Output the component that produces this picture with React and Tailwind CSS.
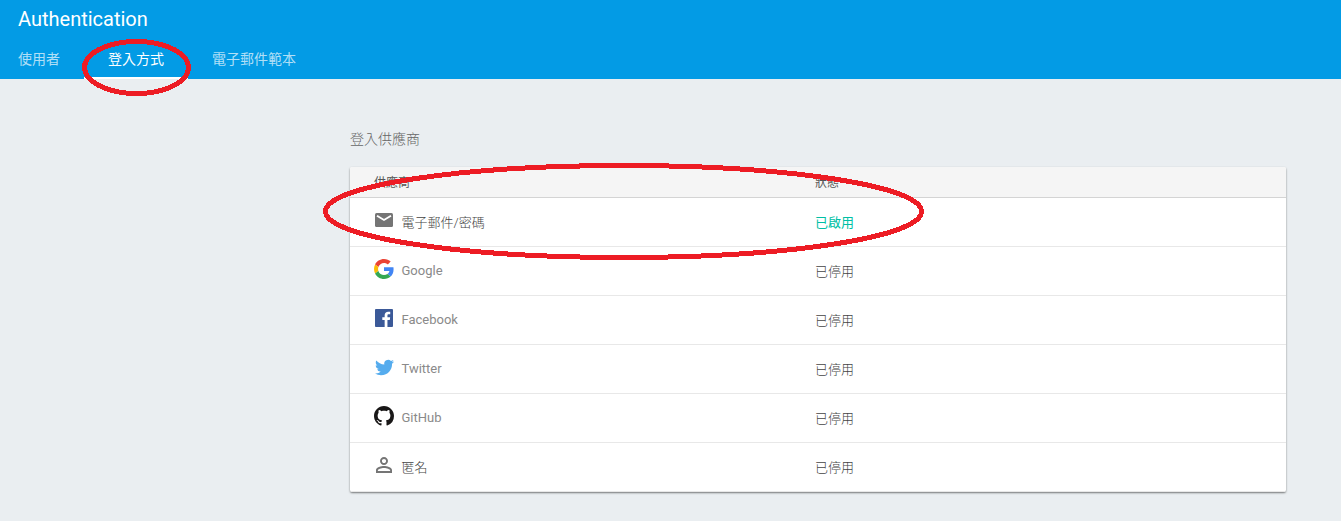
import React from "react";

const MailIcon = () => (
  <svg viewBox="0 0 18 14" className="h-[14px] w-[18px]">
    <rect width="18" height="14" rx="1.5" fill="#757575" />
    <path d="M2 2.8L9 7l7-4.2" fill="none" stroke="#fff" strokeWidth="1.9" />
  </svg>
);

const GoogleIcon = () => (
  <svg viewBox="0 0 48 48" className="size-5">
    <path fill="#EA4335" d="M24 9.5c3.54 0 6.71 1.22 9.21 3.6l6.85-6.85C35.9 2.38 30.47 0 24 0 14.62 0 6.51 5.38 2.56 13.22l7.98 6.19C12.43 13.72 17.74 9.5 24 9.5z" />
    <path fill="#4285F4" d="M46.98 24.55c0-1.57-.15-3.09-.38-4.55H24v9.02h12.94c-.58 2.96-2.26 5.48-4.78 7.18l7.73 6c4.51-4.18 7.09-10.36 7.09-17.65z" />
    <path fill="#FBBC05" d="M10.53 28.59c-.48-1.45-.76-2.99-.76-4.59s.27-3.14.76-4.59l-7.98-6.19C.92 16.46 0 20.12 0 24c0 3.88.92 7.54 2.56 10.78l7.97-6.19z" />
    <path fill="#34A853" d="M24 48c6.48 0 11.93-2.13 15.89-5.81l-7.73-6c-2.15 1.45-4.92 2.3-8.16 2.3-6.26 0-11.57-4.22-13.47-9.91l-7.98 6.19C6.51 42.62 14.62 48 24 48z" />
  </svg>
);

const FacebookIcon = () => (
  <svg viewBox="0 0 18 18" className="size-[18px]">
    <rect width="18" height="18" rx="0.9" fill="#3b5998" />
    <path fill="#fff" d="M12.45 18v-6.97h2.34l.35-2.72h-2.69V6.58c0-.79.22-1.32 1.35-1.32h1.44V2.83c-.25-.03-1.1-.11-2.1-.11-2.07 0-3.49 1.27-3.49 3.59v2H7.3v2.72h2.35V18z" />
  </svg>
);

const TwitterIcon = () => (
  <svg viewBox="0 0 24 24" className="h-[19px] w-[19px]" fill="#55acee">
    <path d="M23.953 4.57a10 10 0 01-2.825.775 4.958 4.958 0 002.163-2.723c-.951.555-2.005.959-3.127 1.184a4.92 4.92 0 00-8.384 4.482C7.69 8.095 4.067 6.13 1.64 3.162a4.822 4.822 0 00-.666 2.475c0 1.71.87 3.213 2.188 4.096a4.904 4.904 0 01-2.228-.616v.06a4.923 4.923 0 003.946 4.827 4.996 4.996 0 01-2.212.085 4.936 4.936 0 004.604 3.417 9.867 9.867 0 01-6.102 2.105c-.39 0-.779-.023-1.17-.067a13.995 13.995 0 007.557 2.209c9.053 0 13.998-7.496 13.998-13.985 0-.21 0-.42-.015-.63A9.935 9.935 0 0024 4.59z" />
  </svg>
);

const GitHubIcon = () => (
  <svg viewBox="0 0 16 16" className="size-5" fill="#191717">
    <path d="M8 0C3.58 0 0 3.58 0 8c0 3.54 2.29 6.53 5.47 7.59.4.07.55-.17.55-.38 0-.19-.01-.82-.01-1.49-2.01.37-2.53-.49-2.69-.94-.09-.23-.48-.94-.82-1.13-.28-.15-.68-.52-.01-.53.63-.01 1.08.58 1.23.82.72 1.21 1.87.87 2.33.66.07-.52.28-.87.51-1.07-1.78-.2-3.64-.89-3.64-3.95 0-.87.31-1.59.82-2.15-.08-.2-.36-1.02.08-2.12 0 0 .67-.21 2.2.82.64-.18 1.32-.27 2-.27s1.36.09 2 .27c1.53-1.04 2.2-.82 2.2-.82.44 1.1.16 1.92.08 2.12.51.56.82 1.27.82 2.15 0 3.07-1.87 3.75-3.65 3.95.29.25.54.73.54 1.48 0 1.07-.01 1.93-.01 2.2 0 .21.15.46.55.38A8.01 8.01 0 0016 8c0-4.42-3.58-8-8-8z" />
  </svg>
);

const PersonIcon = () => (
  <svg viewBox="0 0 24 24" className="size-6 shrink-0" fill="#757575">
    <path d="M12 5.9c1.16 0 2.1.94 2.1 2.1s-.94 2.1-2.1 2.1S9.9 9.16 9.9 8s.94-2.1 2.1-2.1m0 9c2.97 0 6.1 1.46 6.1 2.1v1.1H5.9V17c0-.64 3.13-2.1 6.1-2.1M12 4C9.79 4 8 5.79 8 8s1.79 4 4 4 4-1.79 4-4-1.79-4-4-4zm0 9c-2.67 0-8 1.34-8 4v3h16v-3c0-2.66-5.33-4-8-4z" />
  </svg>
);

const providers = [
  { name: "電子郵件/密碼", icon: MailIcon, enabled: true, cjk: true },
  { name: "Google", icon: GoogleIcon },
  { name: "Facebook", icon: FacebookIcon },
  { name: "Twitter", icon: TwitterIcon },
  { name: "GitHub", icon: GitHubIcon },
  { name: "匿名", icon: PersonIcon, cjk: true },
];

function ProviderRow({ provider }) {
  const Icon = provider.icon;
  return (
    <div className="flex h-[49px] items-center border-b border-[#e8e8e8] pl-6 text-[13px]">
      <div className="flex w-[441px] items-center">
        <span className="mb-1 flex size-5 items-center justify-center">
          <Icon />
        </span>
        <span className={provider.cjk ? "ml-[7.5px] pt-px font-light text-[#444]" : "ml-[7.5px] text-[#8a8a8a]"}>{provider.name}</span>
      </div>
      <span className={provider.enabled ? "pt-px text-[#00bfa5]" : "pt-px font-light text-[#444]"}>
        {provider.enabled ? "已啟用" : "已停用"}
      </span>
    </div>
  );
}

export default function App() {
  return (
    <div className="relative h-[521px] w-[1341px] overflow-hidden bg-[#eaeef1] font-['Roboto','Noto_Sans_CJK_TC',sans-serif]">
      <header className="flex h-[79px] flex-col bg-[#039be5] text-white">
        <h1 className="h-[39px] pl-[18px] text-[20px] leading-[38px]">Authentication</h1>
        <nav className="flex h-10 text-[14px] leading-10 text-white/70">
          <span className="w-[84px] pl-[18px]">使用者</span>
          <span className="w-[104px] border-b-2 border-white pl-6 text-white">登入方式</span>
          <span className="pl-6">電子郵件範本</span>
        </nav>
      </header>

      <main className="ml-[350px] w-[936px] pt-[49px]">
        <h2 className="h-[39px] text-[14px] font-light leading-[22px] text-[#666]">登入供應商</h2>
        <section className="overflow-hidden rounded-[2px] bg-white shadow-[0_1px_2px_rgba(0,0,0,0.5)]">
          <div className="flex h-[31px] border-b border-[#d4d4d4] bg-[#f5f5f5] pl-6 text-[12px] leading-[32px] text-[#555]">
            <span className="w-[441px]">供應商</span>
            <span>狀態</span>
          </div>
          {providers.map((p) => (
            <ProviderRow key={p.name} provider={p} />
          ))}
        </section>
      </main>

      <svg className="pointer-events-none absolute inset-0" width="1341" height="521" fill="none" stroke="#ed1c24" strokeWidth="5" shapeRendering="crispEdges">
        <ellipse cx="136.5" cy="67.5" rx="52" ry="26" />
        <ellipse cx="623.5" cy="211.5" rx="298" ry="46" />
      </svg>
    </div>
  );
}
